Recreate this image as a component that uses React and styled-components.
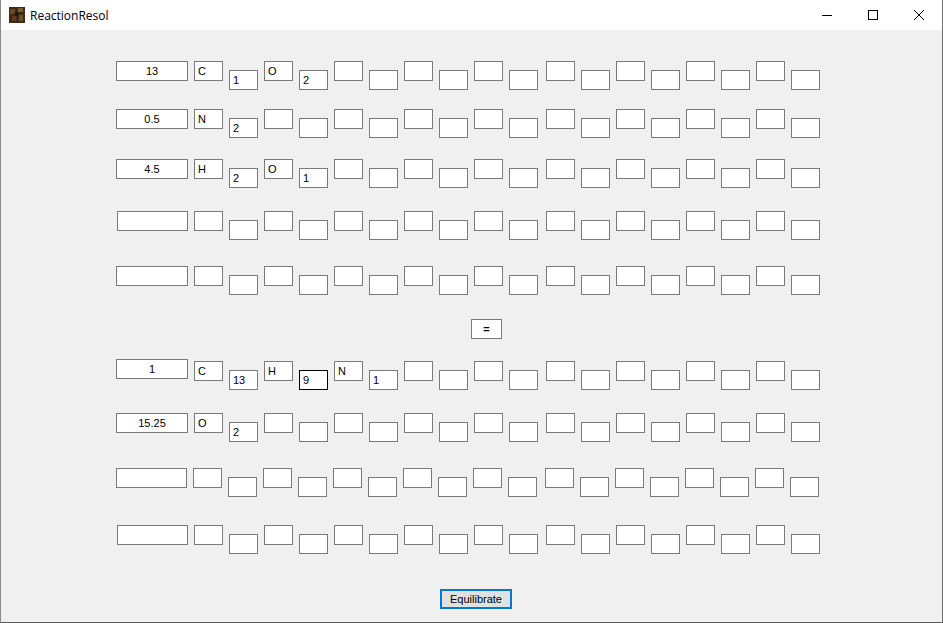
import React from 'react';
import styled, { createGlobalStyle } from 'styled-components';

// Reaction balancer window, Win10 look
const GlobalStyle = createGlobalStyle`
  html, body {
    margin: 0;
    padding: 0;
    background: #f0f0f0;
  }
  * { box-sizing: border-box; }
`;

const Window = styled.div`
  width: 943px;
  height: 623px;
  display: flex;
  flex-direction: column;
  background: #f0f0f0;
  border-left: 1px solid #8c8c8c;
  border-right: 1px solid #6f6f6f;
  border-bottom: 1px solid #5a5a5a;
  overflow: hidden;
`;

const TitleBar = styled.div`
  height: 30px;
  flex: none;
  display: flex;
  align-items: center;
  background: #fff;
  padding-left: 8px;
`;

const Title = styled.span`
  margin-left: 5px;
  font-family: "Segoe UI", "Open Sans", "Noto Sans", sans-serif;
  font-size: 12px;
  color: #000;
`;

const Controls = styled.div`
  margin-left: auto;
  display: flex;
  height: 100%;
`;

const CaptionButton = styled.div`
  width: 46px;
  height: 30px;
  display: flex;
  align-items: center;
  justify-content: center;
`;

const Content = styled.div`
  flex: 1;
  display: flex;
  flex-direction: column;
  align-items: flex-start;
  padding-left: 115px;
`;

const Row = styled.div`
  display: flex;
  align-items: flex-start;
  margin-top: ${p => p.$top}px;
`;

const Box = styled.input`
  height: 20px;
  margin: 0;
  border: 1px solid ${p => (p.$active ? '#000' : '#7a7a7a')};
  background: #fff;
  font-family: "Liberation Sans", Arial, sans-serif;
  font-size: 11px;
  color: #000;
  outline: none;
  border-radius: 0;
`;

const Coeff = styled(Box)`
  width: ${p => p.$w || 72}px;
  margin-left: ${p => p.$ml || 0}px;
  margin-top: ${p => p.$mt || 0}px;
  margin-right: 6px;
  text-align: center;
  padding: 0 2px;
`;

const Elem = styled(Box)`
  width: 29px;
  padding: 0 3px;
  margin-left: ${p => (p.$first ? 0 : p.$wide ? 8 : 6)}px;
`;

const Sub = styled(Elem)`
  margin-top: 9px;
`;

const EqualsButton = styled.button`
  width: 31px;
  height: 20px;
  margin: 24px 0 0 355px;
  padding: 0;
  border: 1px solid #7a7a7a;
  background: #fff;
  font-family: "Liberation Sans", Arial, sans-serif;
  font-size: 11px;
  font-weight: bold;
  color: #000;
`;

const EquilibrateButton = styled.button`
  width: 72px;
  height: 20px;
  margin: 35px 0 0 324px;
  padding: 0;
  border: 2px solid #0078d7;
  background: #e1e1e1;
  font-family: "Liberation Sans", Arial, sans-serif;
  font-size: 11px;
  color: #000;
`;

const AppIcon = () => (
  <svg width="16" height="16" viewBox="0 0 16 16">
    <rect width="16" height="16" fill="#3b2a17" />
    <rect x="1" y="2" width="5" height="5" fill="#6b4a24" />
    <rect x="9" y="1" width="5" height="4" fill="#7a5a2e" />
    <rect x="3" y="9" width="4" height="5" fill="#5c3d1c" />
    <rect x="10" y="8" width="4" height="6" fill="#6e5230" />
    <rect x="6" y="5" width="3" height="4" fill="#1f150a" />
  </svg>
);

const reactants = [
  { top: 31, coeff: '13', items: [['C', '1'], ['O', '2']] },
  { top: 19, coeff: '0.5', items: [['N', '2']] },
  { top: 21, coeff: '4.5', items: [['H', '2'], ['O', '1']] },
  { top: 23, coeff: '', items: [], ml: 1, w: 71 },
  { top: 26, coeff: '', items: [] },
];

const products = [
  { top: 22, coeff: '1', items: [['C', '13'], ['H', '9'], ['N', '1']], mt: -2, active: 1 },
  { top: 23, coeff: '15.25', items: [['O', '2']] },
  { top: 26, coeff: '', items: [], w: 71 },
  { top: 28, coeff: '', items: [], ml: 1, w: 71 },
];

function Species({ row }) {
  const pairs = Array.from({ length: 9 }, (_, i) => row.items[i] || ['', '']);
  return (
    <Row $top={row.top}>
      <Coeff defaultValue={row.coeff} $w={row.w} $ml={row.ml} $mt={row.mt} />
      {pairs.map(([el, n], i) => (
        <React.Fragment key={i}>
          <Elem defaultValue={el} $first={i === 0} $wide={i === 5} />
          <Sub defaultValue={n} $active={row.active === i} />
        </React.Fragment>
      ))}
    </Row>
  );
}

export default function App() {
  return (
    <>
      <GlobalStyle />
      <Window>
        <TitleBar>
          <AppIcon />
          <Title>ReactionResol</Title>
          <Controls>
            <CaptionButton>
              <svg width="10" height="10" viewBox="0 0 10 10">
                <line x1="0" y1="5.5" x2="10" y2="5.5" stroke="#000" strokeWidth="1" />
              </svg>
            </CaptionButton>
            <CaptionButton>
              <svg width="10" height="10" viewBox="0 0 10 10">
                <rect x="0.5" y="0.5" width="9" height="9" fill="none" stroke="#000" strokeWidth="1" />
              </svg>
            </CaptionButton>
            <CaptionButton>
              <svg width="10" height="10" viewBox="0 0 10 10">
                <path d="M0 0 L10 10 M10 0 L0 10" stroke="#000" strokeWidth="1" />
              </svg>
            </CaptionButton>
          </Controls>
        </TitleBar>
        <Content>
          {reactants.map((r, i) => <Species key={'r' + i} row={r} />)}
          <EqualsButton>=</EqualsButton>
          {products.map((r, i) => <Species key={'p' + i} row={r} />)}
          <EquilibrateButton>Equilibrate</EquilibrateButton>
        </Content>
      </Window>
    </>
  );
}
